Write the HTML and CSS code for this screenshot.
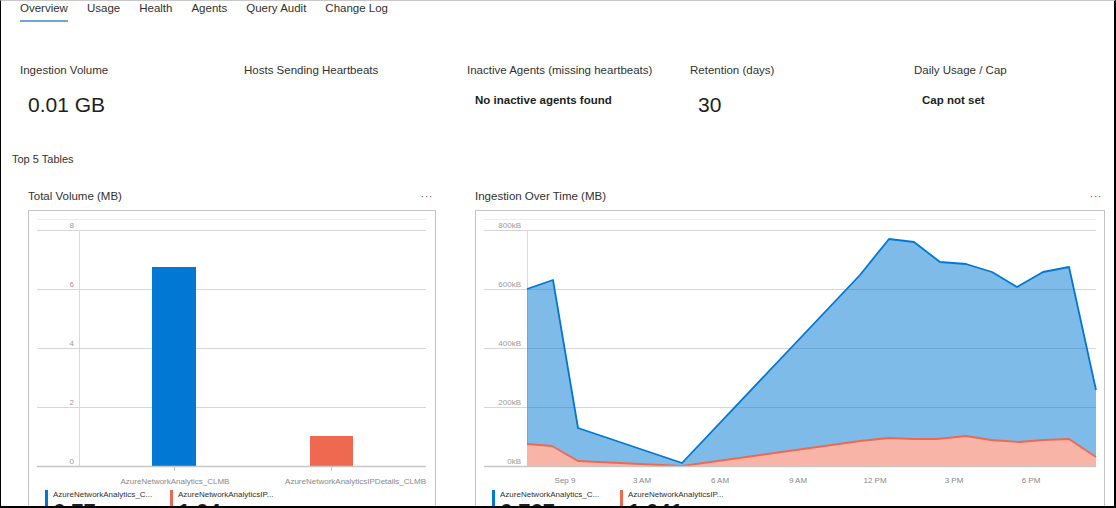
FILE: index.html
```html
<!DOCTYPE html>
<html lang="en">
<head>
<meta charset="utf-8">
<title>Workspace Usage</title>
<link rel="stylesheet" href="styles.css">
</head>
<body>
<div class="frame">
  <nav class="tabs">
    <span class="tab active">Overview</span>
    <span class="tab">Usage</span>
    <span class="tab">Health</span>
    <span class="tab">Agents</span>
    <span class="tab">Query Audit</span>
    <span class="tab">Change Log</span>
  </nav>

  <section class="metrics">
    <div class="metric">
      <div class="metric-label">Ingestion Volume</div>
      <div class="metric-big">0.01 GB</div>
    </div>
    <div class="metric">
      <div class="metric-label">Hosts Sending Heartbeats</div>
    </div>
    <div class="metric">
      <div class="metric-label">Inactive Agents (missing heartbeats)</div>
      <div class="metric-text">No inactive agents found</div>
    </div>
    <div class="metric">
      <div class="metric-label">Retention (days)</div>
      <div class="metric-big">30</div>
    </div>
    <div class="metric">
      <div class="metric-label">Daily Usage / Cap</div>
      <div class="metric-text">Cap not set</div>
    </div>
  </section>

  <h3 class="section-title">Top 5 Tables</h3>

  <div class="charts">
    <div class="chart chart-volume">
      <div class="chart-head"><span class="chart-title">Total Volume (MB)</span><span class="more">···</span></div>
      <div class="chart-box">
        <svg class="plot" width="406" height="279" viewBox="0 0 406 279">
          <line class="g-top" x1="8" x2="397" y1="8.5" y2="8.5"/>
          <line class="g" x1="8" x2="397" y1="19.5" y2="19.5"/>
          <line class="g" x1="8" x2="397" y1="78.5" y2="78.5"/>
          <line class="g" x1="8" x2="397" y1="137.5" y2="137.5"/>
          <line class="g" x1="8" x2="397" y1="196.5" y2="196.5"/>
          <line class="axis-v" x1="50.5" x2="50.5" y1="19" y2="255"/>
          <text class="ylab" x="45" y="17">8</text>
          <text class="ylab" x="45" y="76">6</text>
          <text class="ylab" x="45" y="135">4</text>
          <text class="ylab" x="45" y="194">2</text>
          <text class="ylab" x="45" y="253">0</text>
          <rect x="123" y="56" width="44" height="199" fill="#0078d4"/>
          <rect x="281" y="225" width="43" height="30" fill="#ef6950"/>
          <line class="base" x1="8" x2="397" y1="255.5" y2="255.5"/>
          <line class="tick" x1="145.5" x2="145.5" y1="256" y2="260"/>
          <line class="tick" x1="302.5" x2="302.5" y1="256" y2="260"/>
          <text class="xlab" x="146" y="273" text-anchor="middle">AzureNetworkAnalytics_CLMB</text>
          <text class="xlab" x="397" y="273" text-anchor="end">AzureNetworkAnalyticsIPDetails_CLMB</text>
        </svg>
        <div class="legend">
          <div class="legend-item blue">
            <div class="legend-name">AzureNetworkAnalytics_C...</div>
            <div class="legend-value">6.77</div>
          </div>
          <div class="legend-item red">
            <div class="legend-name">AzureNetworkAnalyticsIP...</div>
            <div class="legend-value">1.04</div>
          </div>
        </div>
      </div>
    </div>

    <div class="chart chart-time">
      <div class="chart-head"><span class="chart-title">Ingestion Over Time (MB)</span><span class="more">···</span></div>
      <div class="chart-box">
        <svg class="plot" width="628" height="279" viewBox="0 0 628 279">
          <line class="g-top" x1="8" x2="620" y1="8.5" y2="8.5"/>
          <line class="g" x1="8" x2="620" y1="19.5" y2="19.5"/>
          <line class="g" x1="8" x2="620" y1="78.5" y2="78.5"/>
          <line class="g" x1="8" x2="620" y1="137.5" y2="137.5"/>
          <line class="g" x1="8" x2="620" y1="196.5" y2="196.5"/>
          <line class="axis-v" x1="51.5" x2="51.5" y1="19" y2="255"/>
          <text class="ylab" x="45" y="17">800kB</text>
          <text class="ylab" x="45" y="76">600kB</text>
          <text class="ylab" x="45" y="135">400kB</text>
          <text class="ylab" x="45" y="194">200kB</text>
          <text class="ylab" x="45" y="253">0kB</text>
          <path class="area-blue" d="M51,255 L51,78 L77,69 L102,217 L206,252 L384,64 L413,28 L438,31 L464,51 L490,53 L516,61 L541,76 L567,61 L593,56 L620,179 L620,255 Z"/>
          <polyline class="line-blue" points="51,78 77,69 102,217 206,252 384,64 413,28 438,31 464,51 490,53 516,61 541,76 567,61 593,56 620,179"/>
          <path class="area-red" d="M51,255 L51,233 L76,235 L102,250 L206,255 L384,230 L413,227 L438,228 L461,228 L490,225 L515,229 L543,231 L567,229 L593,228 L620,246 L620,255 Z"/>
          <polyline class="line-red" points="51,233 76,235 102,250 206,255 384,230 413,227 438,228 461,228 490,225 515,229 543,231 567,229 593,228 620,246"/>
          <line class="base" x1="8" x2="620" y1="255.5" y2="255.5"/>
          <text class="xlab" x="89" y="272" text-anchor="middle">Sep 9</text>
          <text class="xlab" x="166" y="272" text-anchor="middle">3 AM</text>
          <text class="xlab" x="244" y="272" text-anchor="middle">6 AM</text>
          <text class="xlab" x="322" y="272" text-anchor="middle">9 AM</text>
          <text class="xlab" x="399" y="272" text-anchor="middle">12 PM</text>
          <text class="xlab" x="478" y="272" text-anchor="middle">3 PM</text>
          <text class="xlab" x="555" y="272" text-anchor="middle">6 PM</text>
        </svg>
        <div class="legend">
          <div class="legend-item blue wide">
            <div class="legend-name">AzureNetworkAnalytics_C...</div>
            <div class="legend-value">6.767</div>
          </div>
          <div class="legend-item red wide">
            <div class="legend-name">AzureNetworkAnalyticsIP...</div>
            <div class="legend-value">1.041</div>
          </div>
        </div>
      </div>
    </div>
  </div>
</div>
</body>
</html>
```

FILE: styles.css
```css
html, body {
  margin: 0;
  padding: 0;
  background: #ffffff;
}

body {
  font-family: "Liberation Sans", Arial, sans-serif;
  color: #323130;
}

.frame {
  box-sizing: border-box;
  width: 1116px;
  height: 508px;
  border-top: 1px solid #c8c8c8;
  border-left: 1px solid #000000;
  border-right: 2px solid #000000;
  border-bottom: 2px solid #000000;
  overflow: hidden;
}

/* Tabs */
.tabs {
  display: flex;
  gap: 19px;
  padding-left: 19px;
  height: 21px;
}

.tab {
  font-size: 11.5px;
  line-height: 14px;
  height: 19px;
  color: #323130;
  box-sizing: border-box;
  border-bottom: 2px solid transparent;
  padding-bottom: 5px;
  height: 21px;
}

.tab.active {
  border-bottom-color: #6ea4db;
}

/* Metrics */
.metrics {
  display: grid;
  grid-template-columns: 224px 223px 223px 224px 1fr;
  padding-left: 19px;
  margin-top: 41px;
}

.metric-label {
  font-size: 11.5px;
  line-height: 14px;
  color: #323130;
}

.metric-big {
  font-size: 21px;
  line-height: 26px;
  margin-top: 15px;
  padding-left: 8px;
  color: #201f1e;
}

.metric-text {
  font-size: 11.5px;
  line-height: 14px;
  font-weight: bold;
  margin-top: 16px;
  padding-left: 8px;
  color: #201f1e;
}

.section-title {
  margin: 34px 0 0 11px;
  font-size: 11px;
  line-height: 14px;
  font-weight: normal;
  color: #323130;
}

/* Charts */
.charts {
  display: flex;
  gap: 39px;
  padding-left: 27px;
  margin-top: 23px;
}

.chart-volume { width: 408px; }
.chart-time { width: 630px; }

.chart-head {
  display: flex;
  justify-content: space-between;
  align-items: center;
  height: 14px;
  margin-bottom: 7px;
}

.chart-title {
  font-size: 11.5px;
  line-height: 14px;
  color: #323130;
}

.more {
  font-size: 11px;
  line-height: 14px;
  letter-spacing: 0.5px;
  color: #605e5c;
  padding-right: 3px;
}

.chart-box {
  box-sizing: border-box;
  border: 1px solid #c4c4c4;
  height: 320px;
}

.plot {
  display: block;
}

.plot text {
  font-family: "Liberation Sans", Arial, sans-serif;
}

.g-top { stroke: #ececec; stroke-width: 1; }
.g { stroke: #d6d6d6; stroke-width: 1; }
.base { stroke: #c8c6c4; stroke-width: 1.5; }
.axis-v { stroke: #dadada; stroke-width: 1; }
.tick { stroke: #c8c6c4; stroke-width: 1; }

.ylab {
  font-size: 8px;
  fill: #9a9a9a;
  text-anchor: end;
}

.xlab {
  font-size: 8px;
  fill: #8a8886;
}

.area-blue { fill: #0078d4; fill-opacity: 0.5; }
.line-blue { fill: none; stroke: #0078d4; stroke-width: 1.8; stroke-linejoin: round; }
.area-red { fill: #f7b4a7; }
.line-red { fill: none; stroke: #ef6950; stroke-width: 1.8; stroke-linejoin: round; }

.legend {
  display: flex;
  padding-left: 16px;
}

.legend-item {
  box-sizing: border-box;
  width: 125px;
  padding-left: 5px;
  border-left: 3px solid #0078d4;
}

.legend-item.wide { width: 128px; }
.legend-item.red { border-left-color: #ef6950; }

.legend-name {
  font-size: 8px;
  line-height: 10px;
  color: #323130;
  white-space: nowrap;
}

.legend-value {
  font-size: 22px;
  line-height: 24px;
  font-weight: bold;
  color: #201f1e;
}
```
